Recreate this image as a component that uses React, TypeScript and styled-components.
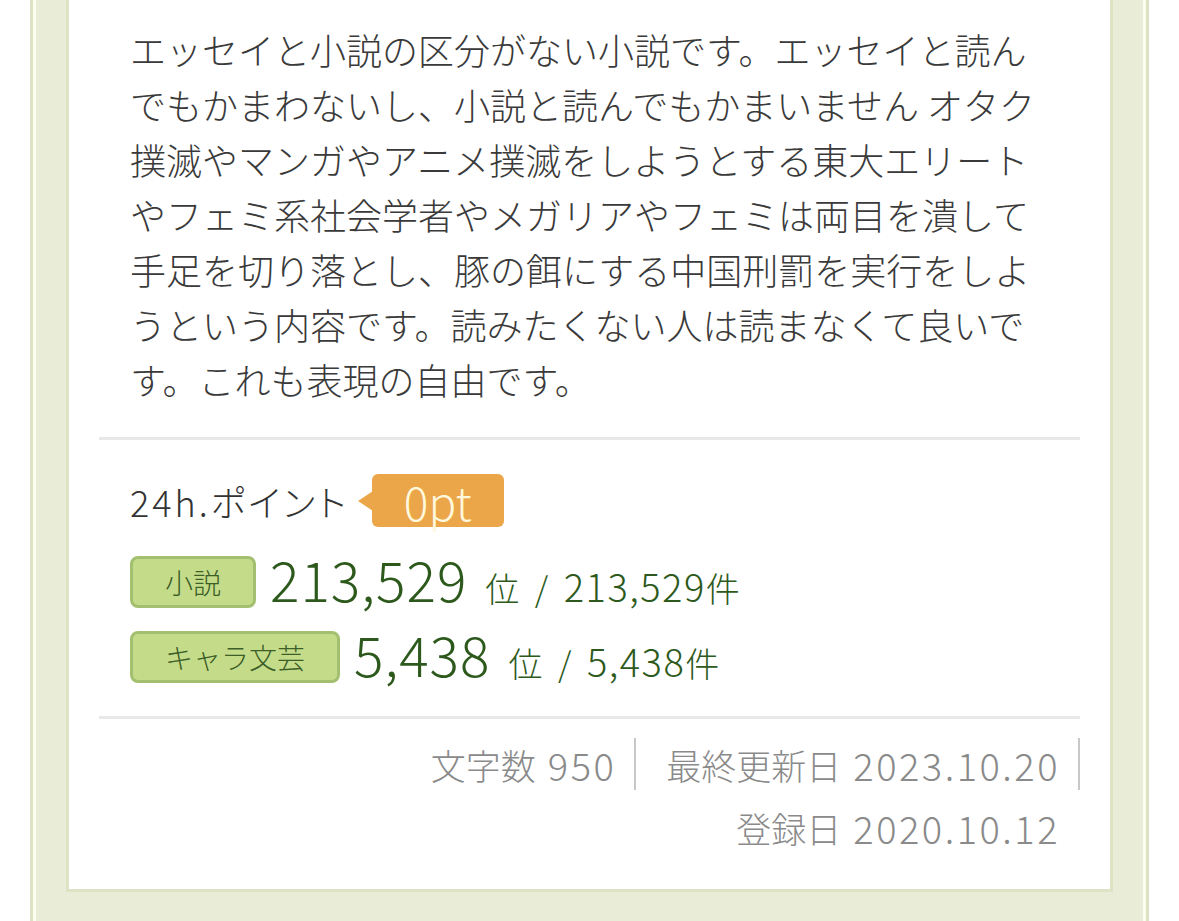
import React from 'react';
import styled, { createGlobalStyle } from 'styled-components';

const GlobalStyle = createGlobalStyle`
  html, body {
    margin: 0;
    padding: 0;
    background: #ffffff;
  }
  body {
    font-family: 'Noto Sans CJK JP', 'Noto Sans', sans-serif;
    font-weight: 300;
    color: #333333;
  }
`;

interface IRank {
  genre: string;
  rank: string;
  total: string;
}

const ranks: IRank[] = [
  { genre: '小説', rank: '213,529', total: '213,529' },
  { genre: 'キャラ文芸', rank: '5,438', total: '5,438' },
];

const description =
  'エッセイと小説の区分がない小説です。エッセイと読んでもかまわないし、小説と読んでもかまいません オタク撲滅やマンガやアニメ撲滅をしようとする東大エリートやフェミ系社会学者やメガリアやフェミは両目を潰して手足を切り落とし、豚の餌にする中国刑罰を実行をしようという内容です。読みたくない人は読まなくて良いです。これも表現の自由です。';

const App = () => {
  return (
    <>
      <GlobalStyle />
      <Frame>
        <Card>
          <Description>{description}</Description>

          <Divider />

          <PointSection>
            <PointRow>
              <PointLabel>24h.ポイント</PointLabel>
              <PointBadge>0pt</PointBadge>
            </PointRow>

            {ranks.map(item => (
              <RankRow key={item.genre}>
                <GenreTag>{item.genre}</GenreTag>
                <RankValue>
                  <RankNumber>{item.rank}</RankNumber>
                  <RankUnit>
                    位 / <RankTotal>{item.total}</RankTotal>件
                  </RankUnit>
                </RankValue>
              </RankRow>
            ))}
          </PointSection>

          <Divider />

          <MetaSection>
            <MetaRow>
              <MetaItem divider>
                文字数<MetaNum>950</MetaNum>
              </MetaItem>
              <MetaItem divider>
                最終更新日<MetaNum>2023.10.20</MetaNum>
              </MetaItem>
            </MetaRow>
            <MetaRow>
              <MetaItem>
                登録日<MetaNum>2020.10.12</MetaNum>
              </MetaItem>
            </MetaRow>
          </MetaSection>
        </Card>
      </Frame>
    </>
  );
};

const Frame = styled.div`
  box-sizing: border-box;
  width: 1119px;
  margin-left: 30px;
  padding: 0 33px 30px;
  background: #e9edd8;
  border-left: 3px solid #dde1c6;
  border-right: 3px solid #dde1c6;
  box-shadow: inset 3px 0 0 #fbfdef, inset -3px 0 0 #fbfdef;
`;

const Card = styled.div`
  background: #ffffff;
  border: 3px solid #dde3c4;
  border-top: none;
  padding: 0 30px 36px;
`;

const Description = styled.p`
  margin: 0;
  padding: 22px 31px 30px;
  font-size: 36px;
  line-height: 55px;
  color: #3a3a3a;
  word-break: break-all;
`;

const Divider = styled.hr`
  margin: 0;
  border: none;
  border-top: 3px solid #e8e8e8;
`;

const PointSection = styled.div`
  padding: 34px 31px 33px;
  display: flex;
  flex-direction: column;
`;

const PointRow = styled.div`
  display: flex;
  align-items: center;
  height: 53px;
  margin-bottom: 29px;
`;

const PointLabel = styled.span`
  font-size: 36px;
  color: #333333;
  letter-spacing: 3px;
  font-feature-settings: 'palt';
`;

const PointBadge = styled.span`
  position: relative;
  display: inline-flex;
  align-items: center;
  height: 53px;
  margin-left: 23px;
  padding: 0 32px;
  border-radius: 6px;
  background: #eba64a;
  color: #fff8dc;
  font-size: 46px;
  line-height: 1;

  &::before {
    content: '';
    position: absolute;
    left: -14px;
    top: 50%;
    margin-top: -10px;
    border-style: solid;
    border-width: 10px 15px 10px 0;
    border-color: transparent #eba64a transparent transparent;
  }
`;

const RankRow = styled.div`
  display: flex;
  align-items: center;
  height: 52px;

  & + & {
    margin-top: 23px;
  }
`;

const GenreTag = styled.span`
  box-sizing: border-box;
  display: inline-flex;
  align-items: center;
  height: 52px;
  padding: 0 32px;
  border: 3px solid #a3c070;
  border-radius: 8px;
  background: #c4dc8a;
  color: #3d5e27;
  font-size: 28px;
`;

const RankValue = styled.span`
  display: flex;
  align-items: baseline;
  margin-left: 14px;
  color: #2d5a1c;
`;

const RankNumber = styled.span`
  font-size: 55px;
  line-height: 1;
  letter-spacing: 1px;
`;

const RankUnit = styled.span`
  margin-left: 18px;
  font-size: 34px;
  word-spacing: 8px;
`;

const RankTotal = styled.span`
  font-size: 38px;
  letter-spacing: 1.5px;
  word-spacing: 0;
`;

const MetaSection = styled.div`
  padding-top: 19px;
  display: flex;
  flex-direction: column;
  gap: 11px;
`;

const MetaRow = styled.div`
  display: flex;
  justify-content: flex-end;
`;

const MetaItem = styled.span<{ divider?: boolean }>`
  display: flex;
  align-items: center;
  height: 52px;
  padding: 0 18px 0 30px;
  font-size: 35px;
  color: #8a8a8a;
  border-right: 2px solid ${p => (p.divider ? '#c8c8c8' : 'transparent')};
`;

const MetaNum = styled.span`
  margin-left: 12px;
  font-size: 38px;
  letter-spacing: 2.5px;
`;

export default App;
